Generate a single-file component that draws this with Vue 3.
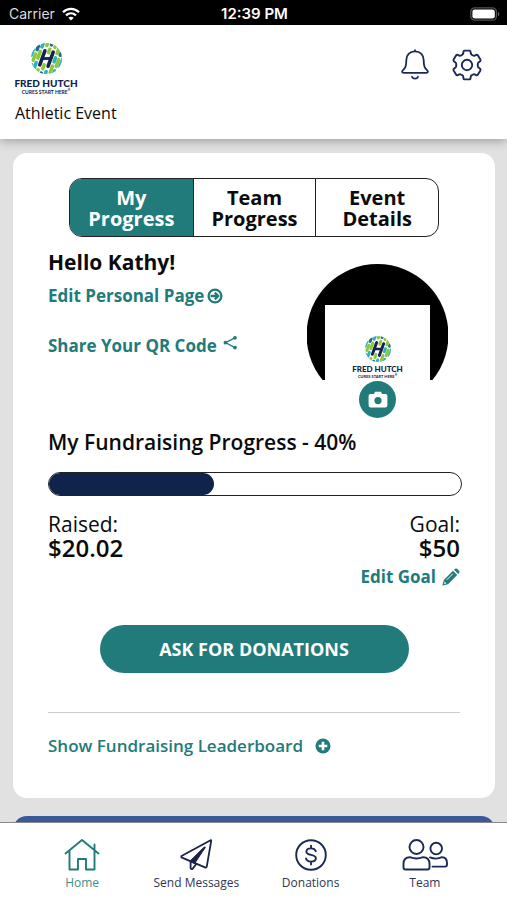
<script setup>
import { ref } from 'vue'

const tabs = [
  ['My', 'Progress'],
  ['Team', 'Progress'],
  ['Event', 'Details'],
]
const activeTab = ref(0)
const raised = 20.02
const goal = 50
const percent = Math.round((raised / goal) * 100)

// Slanted capsules of the emblem: [x, y1, y2, colour]
const G = '#8dc63f'
const T = '#2fb3ba'
const N = '#1f6f8b'
const capsules = [
  [0, 22, 34, T],
  [7, 12, 20, N], [7, 29, 42, G], [7, 51, 54, T],
  [14, 4, 12, T], [14, 21, 35, G], [14, 44, 54, T],
  [22, -2, 6, G], [22, 56, 64, G],
  [30, -2, 2, N], [30, 11, 18, G], [30, 43, 51, G], [30, 60, 64, N],
  [38, -4, 4, G], [38, 54, 62, T],
  [46, 3, 14, G], [46, 23, 31, T], [46, 40, 53, G],
  [53, 11, 15, N], [53, 24, 38, G], [53, 47, 52, T],
  [60, 20, 36, T],
]
</script>

<template>
  <div class="app">
    <svg class="sprite" aria-hidden="true">
      <defs>
        <clipPath id="disc"><circle cx="30" cy="30" r="30" /></clipPath>
        <symbol id="emblem" viewBox="0 0 60 60">
          <g clip-path="url(#disc)">
            <g transform="rotate(20 30 30)" stroke-width="6.8" stroke-linecap="round" fill="none">
              <path v-for="(c, i) in capsules" :key="i" :d="`M${c[0]} ${c[1]}V${c[2]}`" :stroke="c[3]" />
              <path d="M22 17V46M38 14V43" stroke="#14234c" stroke-width="6.8" />
              <path d="M22 33L38 27" stroke="#14234c" stroke-width="5.4" />
            </g>
          </g>
        </symbol>
      </defs>
    </svg>

    <div class="status">
      <div class="carrier">
        <span>Carrier</span>
        <svg width="18" height="14" viewBox="0 0 18 14" fill="none" stroke="#fff" stroke-width="2.3">
          <path d="M1 5.2C5.6.7 12.4.7 17 5.2" />
          <path d="M4 8.4C7 5.6 11 5.6 14 8.4" />
          <path d="M9 13.4L6.3 10.7C7.8 9.3 10.2 9.3 11.7 10.7Z" fill="#fff" stroke="none" />
        </svg>
      </div>
      <strong class="clock">12:39 PM</strong>
      <svg class="battery" width="30" height="14" viewBox="0 0 30 14">
        <rect x=".8" y=".8" width="25.6" height="12.4" rx="4" fill="#000" stroke="#555" stroke-width="1.3" />
        <rect x="2.4" y="2.4" width="22.4" height="9.2" rx="2.4" fill="#fff" />
        <path d="M28 4.8C29.8 5.6 29.8 8.4 28 9.2Z" fill="#666" />
      </svg>
    </div>

    <header class="header">
      <div class="brand">
        <div class="logo">
          <svg class="mark"><use href="#emblem" /></svg>
          <span class="name">FRED HUTCH</span>
          <span class="tagline">CURES START HERE<sup>®</sup></span>
        </div>
        <h1 class="event">Athletic Event</h1>
      </div>
      <div class="actions">
        <button class="icon-btn" type="button" aria-label="Notifications">
          <svg width="28" height="32" viewBox="0 0 28 32" fill="none" stroke="#1b2a55" stroke-width="1.8" stroke-linecap="round" stroke-linejoin="round">
            <path d="M14 1.2V2.4M14 2.4C8.6 2.4 5.3 6.2 5.3 11.2C5.3 17.8 4.2 19.2 1.8 21.4C.6 22.6 1.2 23.8 3 23.8H25C26.8 23.8 27.4 22.6 26.2 21.4C23.8 19.2 22.7 17.8 22.7 11.2C22.7 6.2 19.4 2.4 14 2.4Z" />
            <path d="M11 27.8C12 30.2 16 30.2 17 27.8" />
          </svg>
        </button>
        <button class="icon-btn" type="button" aria-label="Settings">
          <svg width="32" height="32" viewBox="0 0 32 32" fill="none" stroke="#1b2a55" stroke-width="1.9" stroke-linejoin="round">
            <path d="M13.4 1.6H18.6Q19.4 1.6 19.5 2.6L19.8 4.6Q20 5.4 20.8 5.8L22 6.5Q22.8 7 23.6 6.6L25.2 5.8Q26.2 5.4 26.8 6.3L29.4 10.6Q29.9 11.5 29.1 12.2L27.5 13.5Q26.8 14 26.8 15V17Q26.8 18 27.5 18.5L29.1 19.8Q29.9 20.5 29.4 21.4L26.8 25.7Q26.2 26.6 25.2 26.2L23.6 25.4Q22.8 25 22 25.5L20.8 26.2Q20 26.6 19.8 27.4L19.5 29.4Q19.4 30.4 18.6 30.4H13.4Q12.6 30.4 12.5 29.4L12.2 27.4Q12 26.6 11.2 26.2L10 25.5Q9.2 25 8.4 25.4L6.8 26.2Q5.8 26.6 5.2 25.7L2.6 21.4Q2.1 20.5 2.9 19.8L4.5 18.5Q5.2 18 5.2 17V15Q5.2 14 4.5 13.5L2.9 12.2Q2.1 11.5 2.6 10.6L5.2 6.3Q5.8 5.4 6.8 5.8L8.4 6.6Q9.2 7 10 6.5L11.2 5.8Q12 5.4 12.2 4.6L12.5 2.6Q12.6 1.6 13.4 1.6Z" />
            <circle cx="16" cy="16" r="5.2" />
          </svg>
        </button>
      </div>
    </header>

    <main class="content">
      <section class="card">
        <div class="tabs" role="tablist">
          <button
            v-for="(tab, i) in tabs"
            :key="i"
            class="tab"
            :class="{ active: activeTab === i }"
            type="button"
            role="tab"
            :aria-selected="activeTab === i"
            @click="activeTab = i"
          >
            {{ tab[0] }}<br />{{ tab[1] }}
          </button>
        </div>

        <div class="profile">
          <div class="intro">
            <h2 class="hello">Hello Kathy!</h2>
            <a class="link" href="#">
              Edit Personal Page
              <svg width="16" height="16" viewBox="0 0 16 16" fill="none" stroke="#217b7b">
                <circle cx="8" cy="8" r="6.4" stroke-width="2.3" />
                <path d="M3.5 8H11M7.8 4.6L11.2 8L7.8 11.4" stroke-width="2.3" />
              </svg>
            </a>
            <a class="link share" href="#">
              Share Your QR Code
              <svg width="14" height="22" viewBox="0 0 14 22" fill="#217b7b" stroke="#217b7b" stroke-width="1.3">
                <path d="M12 2.8L2.4 7.6L12 12.6" fill="none" />
                <circle cx="12" cy="2.8" r="1.2" />
                <circle cx="2.4" cy="7.6" r="1.2" />
                <circle cx="12" cy="12.6" r="1.2" />
              </svg>
            </a>
          </div>
          <div class="photo">
            <div class="avatar">
              <div class="picture">
                <div class="logo small">
                  <svg class="mark"><use href="#emblem" /></svg>
                  <span class="name">FRED HUTCH</span>
                  <span class="tagline">CURES START HERE<sup>®</sup></span>
                </div>
              </div>
            </div>
            <button class="camera" type="button" aria-label="Change photo">
              <svg width="20" height="18" viewBox="0 0 20 18">
                <path d="M6 3L7 .8H13L14 3H17.6Q19.4 3 19.4 4.8V14.6Q19.4 16.4 17.6 16.4H2.4Q.6 16.4 .6 14.6V4.8Q.6 3 2.4 3Z" fill="#fff" />
                <circle cx="10" cy="9.6" r="3.6" fill="#217b7b" />
              </svg>
            </button>
          </div>
        </div>

        <h3 class="progress-title">My Fundraising Progress - {{ percent }}%</h3>
        <div class="bar" role="progressbar" :aria-valuenow="percent" aria-valuemin="0" aria-valuemax="100">
          <div class="fill" :style="{ width: percent + '%' }"></div>
        </div>
        <div class="amounts">
          <div>
            <div class="label">Raised:</div>
            <div class="value">${{ raised }}</div>
          </div>
          <div class="right">
            <div class="label">Goal:</div>
            <div class="value">${{ goal }}</div>
            <a class="link edit-goal" href="#">
              Edit Goal
              <svg width="18" height="18" viewBox="0 0 18 18" fill="#217b7b">
                <path d="M11 2.8L15.2 7L6 16.2L.4 17.6L1.8 12Z" />
                <path d="M12 1.8L13.2 .8Q14.2 0 15.1 .8L17.2 2.9Q18 3.8 17.2 4.8L16.2 6Z" />
                <path d="M10.8 5.8L4.8 11.8" stroke="#fff" stroke-width=".9" />
                <path d="M2.6 13.6L4.4 15.4L2.2 16Z" fill="#fff" />
              </svg>
            </a>
          </div>
        </div>

        <button class="ask" type="button">ASK FOR DONATIONS</button>

        <hr class="rule" />
        <a class="link leaderboard" href="#">
          Show Fundraising Leaderboard
          <svg width="16" height="16" viewBox="0 0 16 16">
            <circle cx="8" cy="8" r="7.5" fill="#217b7b" />
            <path d="M8 3.7V12.3M3.7 8H12.3" stroke="#fff" stroke-width="2.6" />
          </svg>
        </a>
      </section>
      <section class="next-card"></section>
    </main>

    <nav class="nav">
      <a class="item current" href="#">
        <svg width="36" height="34" viewBox="0 0 36 34" fill="none" stroke="#217b7b" stroke-width="1.9" stroke-linecap="round" stroke-linejoin="round">
          <path d="M1.5 15.5L18 2L34.5 15.5M5.5 13V31.5H14V21H22V31.5H30.5V6.5" />
        </svg>
        <span>Home</span>
      </a>
      <a class="item" href="#">
        <svg width="36" height="34" viewBox="0 0 36 34" fill="none" stroke="#1b2247" stroke-width="1.8" stroke-linecap="round" stroke-linejoin="round">
          <path d="M32.6 2.2L3.5 18Q2.8 19 4 19.6L27 29.4Q28.4 29.8 28.8 28.4L33.2 2.8Q33.2 2 32.6 2.2Z" />
          <path d="M26.6 9.6L12.6 23.4V30.2Q13.4 32 14.8 30.6L18.2 26" />
          <path d="M26.6 9.6L12.6 23.4L16.4 25Z" fill="#1b2247" />
        </svg>
        <span>Send Messages</span>
      </a>
      <a class="item" href="#">
        <svg width="36" height="34" viewBox="0 0 36 34" fill="none" stroke="#1b2a55" stroke-width="1.9" stroke-linecap="round">
          <circle cx="18" cy="17" r="14.8" />
          <path d="M18 7.6V10.4M18 23.6V26.6M22.8 13.2C22 11.2 20.4 10.4 18 10.4C15.2 10.4 13.4 11.8 13.4 13.8C13.4 18.2 22.9 15.6 22.9 20.3C22.9 22.4 20.8 23.6 18 23.6C15.4 23.6 13.6 22.5 13 20.5" />
        </svg>
        <span>Donations</span>
      </a>
      <a class="item" href="#">
        <svg width="46" height="34" viewBox="0 0 46 34" fill="none" stroke="#1b2a55" stroke-width="1.9" stroke-linecap="round" stroke-linejoin="round">
          <circle cx="14.5" cy="9" r="7" />
          <path d="M1.5 29.5V26C1.5 21.5 4 19.2 8 19.2C12 20.8 17 20.8 21 19.2C25 19.2 27.5 21.5 27.5 26V29.5Q27.5 31.5 25.5 31.5H3.5Q1.5 31.5 1.5 29.5Z" />
          <circle cx="34.2" cy="10.6" r="5.8" />
          <path d="M28 19.4C31.5 20.8 36.5 20.8 40 19.2C43.4 19.2 45 21.4 45 25V26.5Q45 28.6 43 28.6H30.5" />
        </svg>
        <span>Team</span>
      </a>
    </nav>
  </div>
</template>

<style>
body {
  margin: 0;
}
</style>

<style scoped>
.app {
  --teal: #217b7b;
  --navy: #10234a;
  display: flex;
  flex-direction: column;
  height: 100vh;
  overflow: hidden;
  background: #e1e1e1;
  color: #0b0b0b;
  font-family: "Open Sans", "Noto Sans", sans-serif;
}
.app * {
  box-sizing: border-box;
}
.sprite {
  position: absolute;
  width: 0;
  height: 0;
}
button {
  font: inherit;
  color: inherit;
  border: 0;
  padding: 0;
  background: none;
  cursor: pointer;
}
a {
  color: inherit;
  text-decoration: none;
}
svg {
  display: block;
  flex: none;
}
h1,
h2,
h3 {
  margin: 0;
}

.status {
  display: grid;
  grid-template-columns: 1fr auto 1fr;
  align-items: center;
  flex: none;
  height: 25px;
  padding: 2px 7px 0 9px;
  background: #000;
  color: #fff;
  font: 14px/20px Inter, sans-serif;
}
.carrier {
  display: flex;
  align-items: center;
  gap: 7px;
  color: #ddd;
}
.clock {
  font-size: 15px;
  font-weight: 600;
}
.battery {
  justify-self: end;
}

.header {
  position: relative;
  display: flex;
  justify-content: space-between;
  flex: none;
  height: 114px;
  padding: 18px 24px 0 15px;
  background: #fff;
  box-shadow: 0 2px 10px rgba(0, 0, 0, 0.3);
}
.logo {
  display: flex;
  flex-direction: column;
  align-items: center;
  width: 62px;
  color: var(--navy);
  font-family: Lato, sans-serif;
  white-space: nowrap;
}
.mark {
  width: 31px;
  height: 31px;
}
.name {
  margin-top: 3px;
  font-size: 10px;
  font-weight: 900;
  line-height: 12px;
}
.tagline {
  font-size: 5px;
  font-weight: 700;
  line-height: 6px;
}
.tagline sup {
  font-size: 3px;
  line-height: 0;
}
.small {
  width: 52px;
}
.small .mark {
  width: 26px;
  height: 26px;
}
.small .name {
  margin-top: 2px;
  font-size: 8px;
  line-height: 10px;
}
.small .tagline {
  font-size: 4px;
  line-height: 5px;
}
.event {
  margin-top: 6px;
  font-size: 16px;
  font-weight: 400;
  line-height: 24px;
}
.actions {
  display: flex;
  align-items: flex-start;
  gap: 22px;
  padding-top: 6px;
}

.content {
  flex: 1;
  min-height: 0;
  overflow: hidden;
  padding: 14px 12px 0 13px;
}
.card {
  padding: 25px 35px 40px;
  border-radius: 14px;
  background: #fff;
}
.tabs {
  display: grid;
  grid-template-columns: repeat(3, 1fr);
  margin: 0 21px;
  border: 1px solid #222;
  border-radius: 13px;
  overflow: hidden;
}
.tab {
  height: 57px;
  font-size: 20px;
  font-weight: 700;
  line-height: 21px;
}
.tab + .tab {
  border-left: 1px solid #222;
}
.active {
  background: var(--teal);
  color: #fff;
}

.profile {
  display: flex;
  justify-content: space-between;
  padding-right: 12px;
}
.hello {
  margin-top: 11px;
  font-size: 21px;
  font-weight: 700;
  line-height: 28px;
}
.link {
  display: flex;
  align-items: center;
  gap: 3px;
  color: var(--teal);
  font-size: 17px;
  font-weight: 700;
  line-height: 24px;
}
.intro .link {
  margin-top: 8px;
}
.intro .share {
  margin-top: 26px;
  gap: 6px;
}
.photo {
  display: flex;
  flex-direction: column;
  align-items: center;
  margin-top: 27px;
}
.avatar {
  display: flex;
  justify-content: center;
  width: 141px;
  height: 116px;
  padding-top: 41px;
  background: #000;
  clip-path: circle(71px at 50% 71px);
}
.picture {
  display: flex;
  justify-content: center;
  width: 105px;
  padding-top: 31px;
  background: #fff;
}
.camera {
  display: flex;
  align-items: center;
  justify-content: center;
  width: 37px;
  height: 37px;
  margin-top: 1px;
  border-radius: 50%;
  background: var(--teal);
}

.progress-title {
  margin-top: 10px;
  font-size: 21px;
  font-weight: 600;
  line-height: 28px;
}
.bar {
  height: 24px;
  margin: 16px -2px 0 0;
  border: 1px solid #222;
  border-radius: 12px;
  overflow: hidden;
}
.fill {
  height: 100%;
  border-radius: 12px;
  background: var(--navy);
}
.amounts {
  display: flex;
  justify-content: space-between;
  margin-top: 16px;
}
.right {
  text-align: right;
}
.label {
  font-size: 21px;
  line-height: 24px;
}
.value {
  font-size: 24px;
  font-weight: 600;
  line-height: 24px;
}
.edit-goal {
  margin-top: 5px;
  gap: 6px;
}
.ask {
  display: block;
  width: 75%;
  height: 48px;
  margin: 36px auto 0;
  border-radius: 24px;
  background: var(--teal);
  color: #fff;
  font-size: 18px;
  font-weight: 700;
}
.rule {
  margin: 39px 0 0;
  border: 0;
  border-top: 1px solid #ccc;
}
.leaderboard {
  margin-top: 21px;
  gap: 12px;
  font-weight: 600;
}
.next-card {
  height: 120px;
  margin-top: 18px;
  border-radius: 14px;
  background: #3b5998;
}

.nav {
  display: grid;
  grid-template-columns: repeat(4, 1fr);
  flex: none;
  height: 78px;
  padding: 15px 25px 0;
  border-top: 1px solid #888;
  background: #fff;
}
.item {
  display: flex;
  flex-direction: column;
  align-items: center;
  gap: 2px;
  color: #2f3654;
  font-size: 12px;
  line-height: 18px;
  white-space: nowrap;
}
.current {
  color: #3a8f8b;
}
</style>
